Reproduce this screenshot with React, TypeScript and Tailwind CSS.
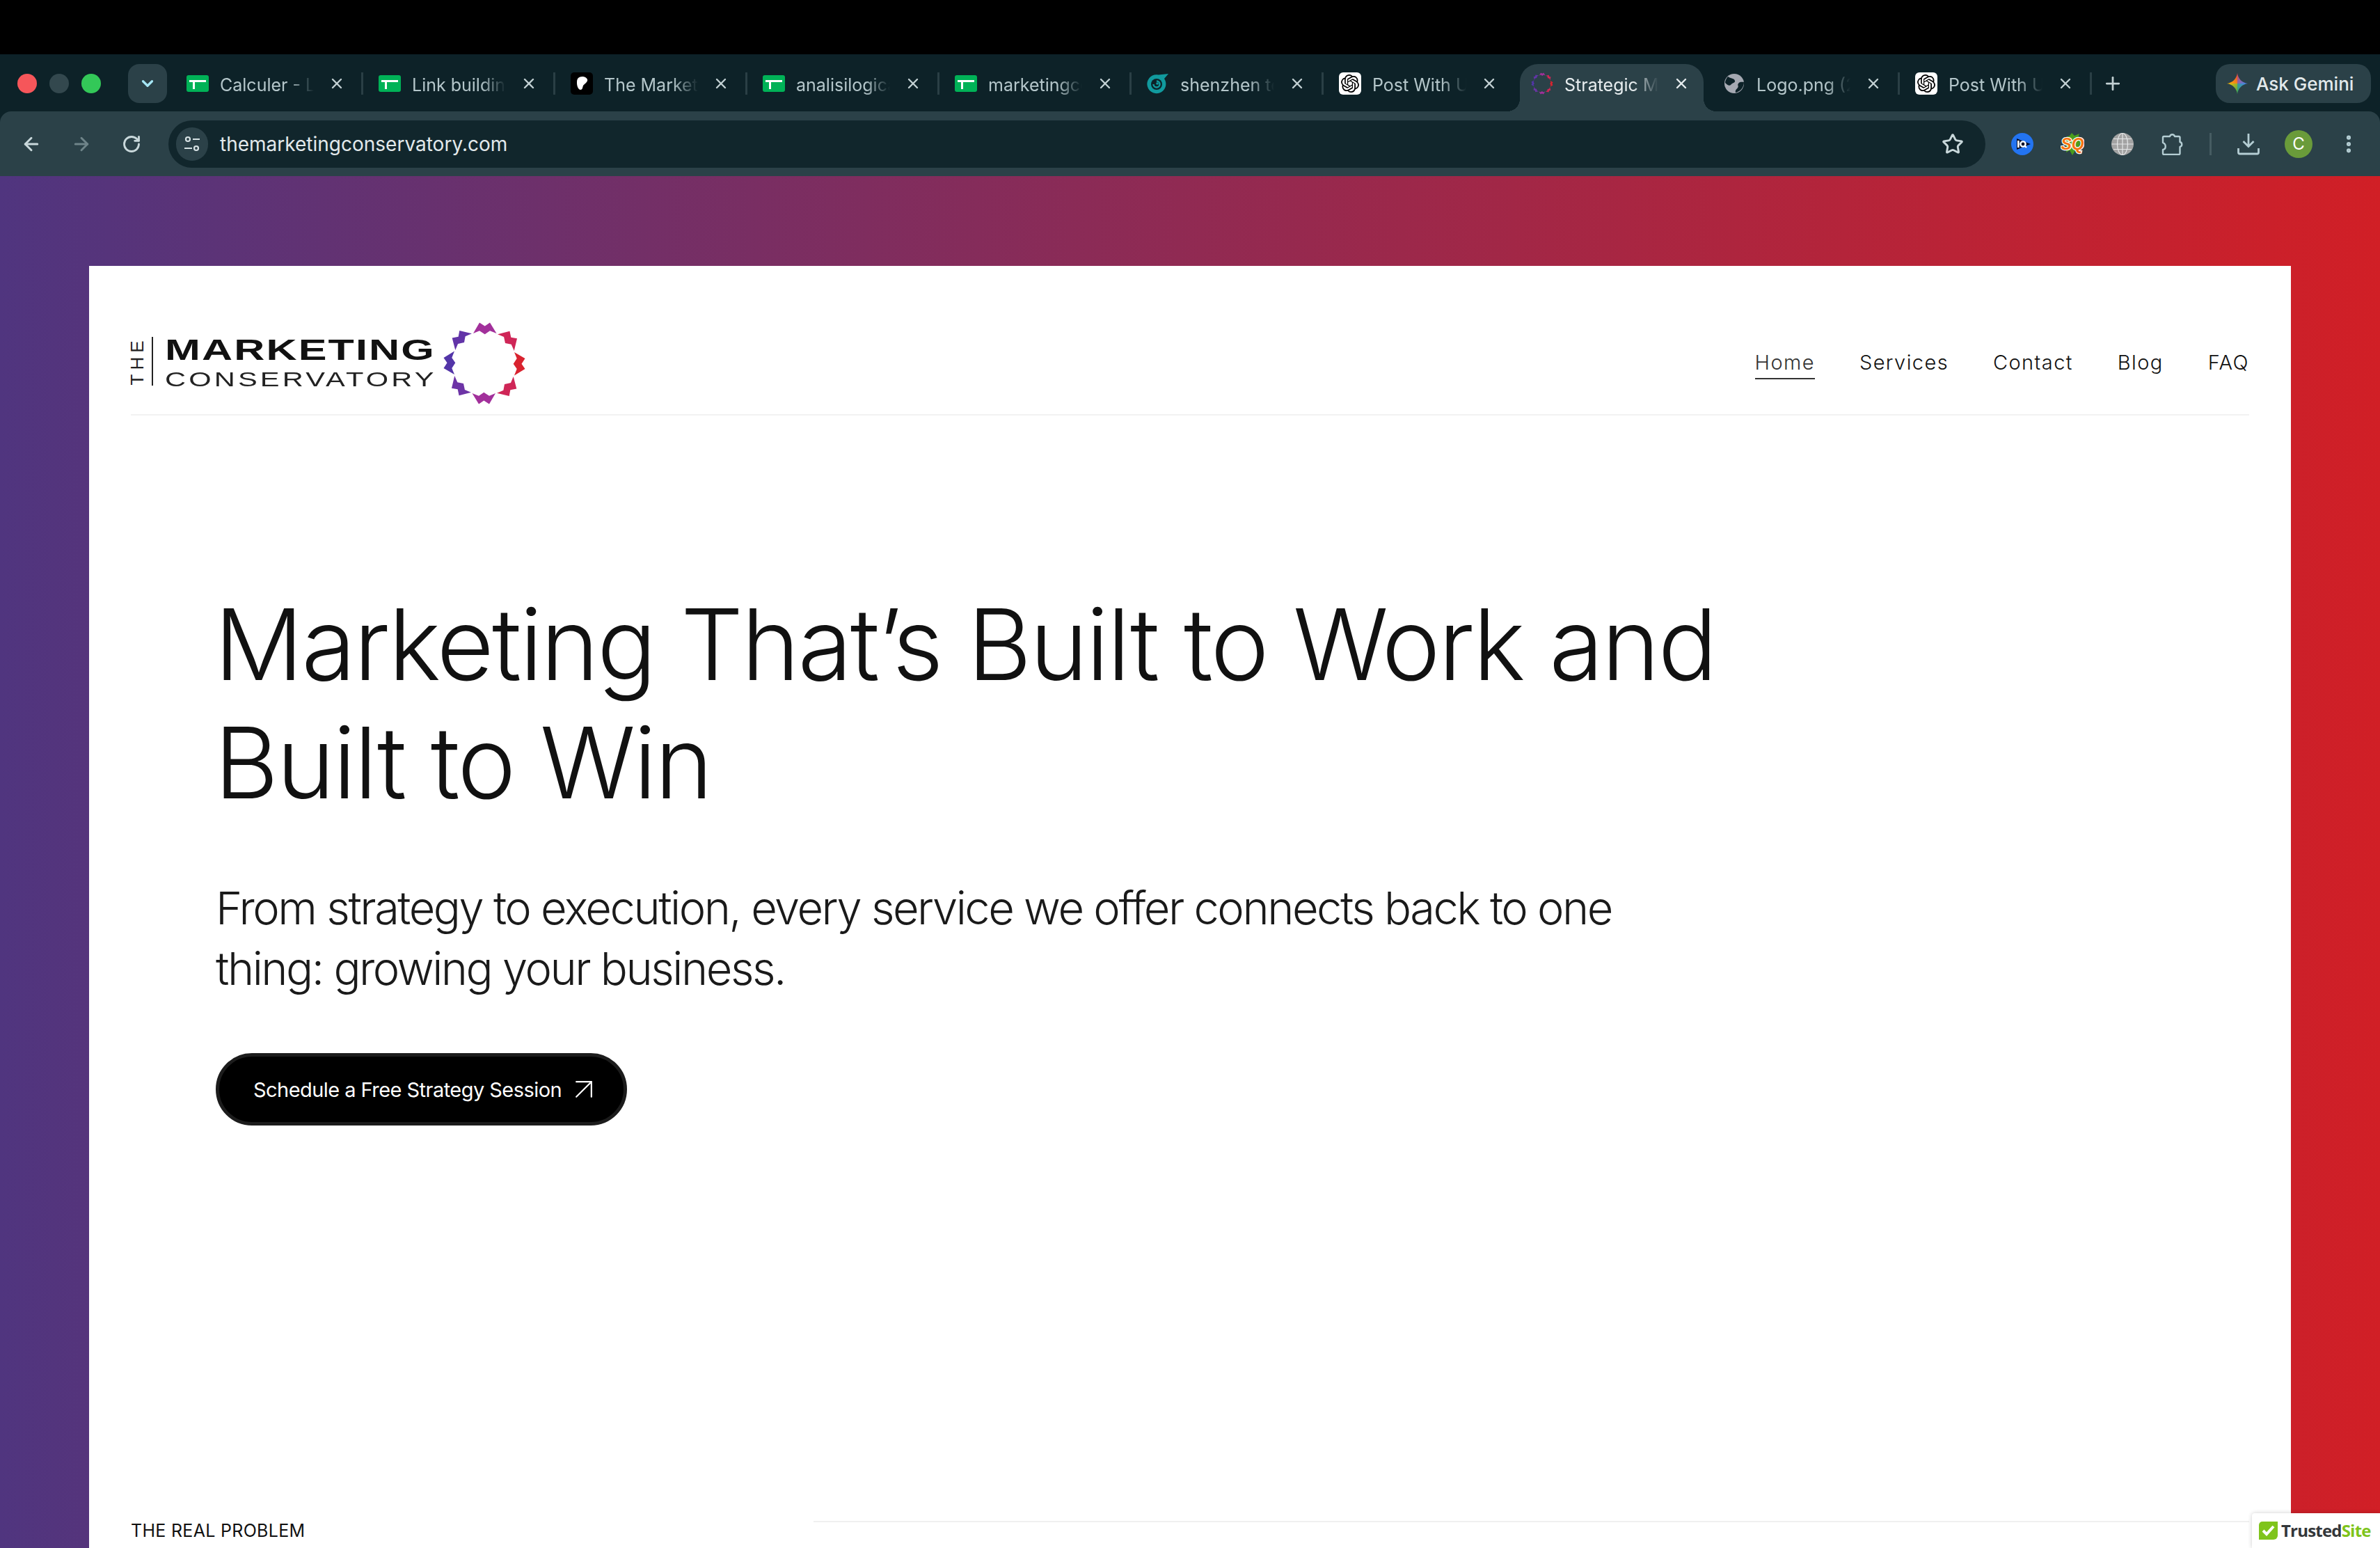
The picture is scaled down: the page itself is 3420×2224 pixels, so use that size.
import { ArrowLeft, ArrowRight, ArrowUpRight, ChevronDown, EllipsisVertical, Plus, RotateCw, Star, X } from "lucide-react";
import { SiOpenai } from "react-icons/si";

const Sheet = () => (
  <svg width="32" height="24" viewBox="0 0 32 24">
    <rect width="32" height="24" rx="3" fill="#00b257" />
    <path d="M4 7h24v3H12v10H9V10H4z" fill="#fff" />
  </svg>
);

const BlackBlob = () => (
  <svg width="32" height="32" viewBox="0 0 32 32">
    <rect width="32" height="32" rx="5" fill="#000" />
    <path d="M11 8c3-3 11-3 13 2 1 4-4 6-6 9-1 3-1 6-4 6-4-1-5-7-5-10 0-3 0-5 2-7z" fill="#fff" />
  </svg>
);

const TealSwirl = () => (
  <svg width="32" height="32" viewBox="0 0 32 32">
    <path d="M31 2 L25 9 A13.5 13.5 0 1 1 17 3.5 Z" fill="#119a9e" />
    <circle cx="14" cy="17" r="8" fill="#0d2228" />
    <path d="M14 12.5a4.5 4.5 0 1 1-4.5 4.5" fill="none" stroke="#119a9e" strokeWidth="2.5" />
    <circle cx="15" cy="16" r="1.8" fill="#119a9e" />
  </svg>
);

const OpenAi = () => (
  <span className="flex h-[32px] w-[32px] items-center justify-center rounded-[6px] bg-white text-black">
    <SiOpenai size={26} />
  </span>
);

const GlobeFav = () => (
  <svg width="30" height="30" viewBox="0 0 30 30">
    <circle cx="15" cy="15" r="14" fill="#a5a9b2" />
    <path d="M6 5c4 3 9 2 10 6 1 3-4 3-6 6-2 2-5 0-8-3 0-3 2-7 4-9zM29 13c-3 0-6-1-8 2-2 2 1 4-1 6-1 2-4 3-3 7 6-1 12-7 12-15z" fill="#0d2228" />
  </svg>
);

const zigzagColors = ["#a2309b", "#cf2657", "#d9232f", "#cf2657", "#a2309b", "#6d34a6", "#5335a8", "#6234a8"];

const SunMark = ({ size }: { size: number }) => (
  <svg width={size} height={size} viewBox="-60 -60 120 120">
    {zigzagColors.map((color, i) => (
      <polygon
        key={i}
        transform={`rotate(${i * 45})`}
        fill={color}
        points="-16,-43 -7,-58.5 0.7,-53.5 8,-58.5 17.5,-43 8,-46.7 0.7,-41.7 -7,-46.7"
      />
    ))}
  </svg>
);

const tabs = [
  { title: "Calculer - L", icon: <Sheet />, sep: true },
  { title: "Link buildin", icon: <Sheet />, sep: true },
  { title: "The Marketi", icon: <BlackBlob />, sep: true },
  { title: "analisilogica", icon: <Sheet />, sep: true },
  { title: "marketingco", icon: <Sheet />, sep: true },
  { title: "shenzhen te", icon: <TealSwirl />, sep: true },
  { title: "Post With U", icon: <OpenAi />, sep: false },
  { title: "Strategic Ma", icon: <SunMark size={32} />, sep: false, active: true },
  { title: "Logo.png (2", icon: <GlobeFav />, sep: true },
  { title: "Post With U", icon: <OpenAi />, sep: true },
];

const Tab = ({ title, icon, sep, active }: { title: string; icon: React.ReactNode; sep: boolean; active?: boolean }) => (
  <div className="relative flex h-[68px] w-[276px] shrink-0 items-center pb-[12px] pl-[20px]">
    {active && (
      <div className="absolute inset-y-0 left-[4px] right-[8px] rounded-t-[26px] bg-[#2b4148]">
        <div className="absolute bottom-0 left-[-18px] h-[18px] w-[18px] bg-[radial-gradient(circle_at_0_0,transparent_18px,#2b4148_18px)]" />
        <div className="absolute bottom-0 right-[-18px] h-[18px] w-[18px] bg-[radial-gradient(circle_at_100%_0,transparent_18px,#2b4148_18px)]" />
      </div>
    )}
    <span className="relative flex w-[32px] shrink-0 items-center justify-center">{icon}</span>
    <span
      className={`relative ml-[16px] mt-[3px] w-[150px] shrink-0 whitespace-nowrap text-[25px] leading-[32px] [mask-image:linear-gradient(to_right,black_66%,transparent_90%)] ${
        active ? "text-[#e6ecee]" : "text-[#b4c6ca]"
      }`}
    >
      {title}
    </span>
    <X className={`relative ml-[6px] shrink-0 ${active ? "text-[#e6ecee]" : "text-[#c2d0d3]"}`} size={24} strokeWidth={2.4} />
    {sep && <span className="absolute right-[2px] top-[12px] h-[32px] w-[3px] bg-[#2a3f45]" />}
  </div>
);

const SiteSettingsIcon = () => (
  <svg width="24" height="26" viewBox="0 0 24 26" fill="none" stroke="#d7e2e4" strokeWidth="2.2">
    <circle cx="6" cy="6" r="3" />
    <path d="M13 6h10M1 19h11" />
    <circle cx="18" cy="19" r="3" />
  </svg>
);

const IqIcon = () => (
  <svg width="32" height="32" viewBox="0 0 32 32">
    <circle cx="16" cy="16" r="16" fill="#2374f2" />
    <path d="M8 8 L28 16 L8 24z" fill="#07102a" />
    <rect x="9" y="11" width="2.6" height="10" fill="#fff" />
    <circle cx="17" cy="16" r="3.6" fill="none" stroke="#fff" strokeWidth="2.4" />
    <path d="M19 18l3 3" stroke="#fff" strokeWidth="2.2" />
  </svg>
);

const SqIcon = () => (
  <svg width="34" height="34" viewBox="0 0 34 34">
    <polygon points="8,7 13,5 16,1 20,5 27,2 25,8 29,13 26,22 28,27 22,25 17,33 13,26 8,29 9,23 5,14" fill="#4a9d1c" />
    <text
      x="17"
      y="25"
      textAnchor="middle"
      fontFamily="Liberation Sans, sans-serif"
      fontSize="23"
      fontWeight="700"
      fontStyle="italic"
      fill="#f57410"
      stroke="#fff"
      strokeWidth="2.6"
      paintOrder="stroke"
    >
      SQ
    </text>
  </svg>
);

const GlobeExt = () => (
  <svg width="32" height="32" viewBox="0 0 32 32" fill="none" stroke="#e4e6e7" strokeWidth="1.2">
    <circle cx="16" cy="16" r="16" fill="#a3a3a3" stroke="none" />
    <ellipse cx="16" cy="16" rx="7.5" ry="15.5" />
    <path d="M16 0v32M0.5 16h31M3 8.5h26M3 23.5h26" />
  </svg>
);

const PuzzleIcon = () => (
  <svg width="32" height="32" viewBox="0 0 32 32" fill="none" stroke="#b4cdd3" strokeWidth="2.4" strokeLinejoin="round">
    <path d="M3.500 5H12a3.600 3.600 0 0 1 7 0h6a1.500 1.500 0 0 1 1.500 1.500V13a3.600 3.600 0 0 1 0 7v9.500A1.500 1.500 0 0 1 25 31H3.500A1.500 1.500 0 0 1 2 29.500V24c5-1 5-8 0-10V6.500A1.500 1.500 0 0 1 3.500 5z" />
  </svg>
);

const DownloadIcon = () => (
  <svg width="32" height="32" viewBox="0 0 32 32" fill="none" stroke="#b4cdd3" strokeWidth="2.8">
    <path d="M16 1v18M8.500 12l7.500 7.500 7.500-7.500" />
    <path d="M1.500 22v6a2 2 0 0 0 2 2h25a2 2 0 0 0 2-2v-6" />
  </svg>
);

const GeminiStar = () => (
  <svg width="30" height="30" viewBox="0 0 30 30">
    <defs>
      <linearGradient id="gemTl" x1="1" y1="0" x2="0" y2="1">
        <stop offset="0" stopColor="#ea4335" />
        <stop offset="1" stopColor="#fbbc04" />
      </linearGradient>
      <linearGradient id="gemTr" x1="0" y1="0" x2="1" y2="1">
        <stop offset="0" stopColor="#d9455f" />
        <stop offset="1" stopColor="#4285f4" />
      </linearGradient>
      <linearGradient id="gemBr" x1="1" y1="0" x2="0" y2="1">
        <stop offset="0" stopColor="#4285f4" />
        <stop offset="1" stopColor="#34a853" />
      </linearGradient>
      <linearGradient id="gemBl" x1="0" y1="0" x2="1" y2="1">
        <stop offset="0" stopColor="#fbbc04" />
        <stop offset="1" stopColor="#34a853" />
      </linearGradient>
    </defs>
    <path d="M15 0C14 8 8 14 0 15H15z" fill="url(#gemTl)" />
    <path d="M15 0C16 8 22 14 30 15H15z" fill="url(#gemTr)" />
    <path d="M30 15C22 16 16 22 15 30V15z" fill="url(#gemBr)" />
    <path d="M0 15C8 16 14 22 15 30V15z" fill="url(#gemBl)" />
  </svg>
);

const ToolSlot = ({ children }: { children: React.ReactNode }) => (
  <span className="flex w-[72px] shrink-0 items-center justify-center">{children}</span>
);

const navItems = ["Home", "Services", "Contact", "Blog", "FAQ"];

export default function App() {
  return (
    <div className="flex h-[2224px] w-[3420px] flex-col overflow-hidden bg-black [font-family:Inter,sans-serif]">
      <div className="h-[78px] shrink-0 bg-black" />

      {/* tab strip */}
      <div className="flex h-[82px] shrink-0 items-start bg-[#0d2228] pt-[14px]">
        <div className="ml-[25px] mt-[14px] flex gap-[18px]">
          <span className="h-[28px] w-[28px] rounded-full bg-[#f6565a]" />
          <span className="h-[28px] w-[28px] rounded-full bg-[#33484e]" />
          <span className="h-[28px] w-[28px] rounded-full bg-[#33c858]" />
        </div>
        <div className="ml-[39px] flex h-[56px] w-[56px] items-center justify-center rounded-[16px] bg-[#2b4148] text-[#a5e6f5]">
          <ChevronDown size={26} strokeWidth={3} />
        </div>
        <div className="ml-[8px] flex">
          {tabs.map((tab, i) => (
            <Tab key={i} {...tab} />
          ))}
        </div>
        <div className="flex h-[56px] w-[56px] items-center justify-center text-[#c2d0d3]">
          <Plus size={30} strokeWidth={2.2} />
        </div>
        <div className="ml-auto mr-[13px] flex h-[56px] w-[223px] items-center gap-[12px] rounded-[20px] bg-[#2b4148] pl-[16px]">
          <GeminiStar />
          <span className="whitespace-nowrap text-[26px] font-medium text-[#e2e9eb]">Ask Gemini</span>
        </div>
      </div>

      {/* toolbar */}
      <div className="shrink-0 bg-[#0d2228]">
        <div className="flex h-[93px] items-center rounded-t-[16px] bg-[#2b4148]">
          <div className="flex w-[242px] shrink-0 pl-[9px]">
            <ToolSlot>
              <ArrowLeft className="text-[#c9d8db]" size={30} strokeWidth={2.4} />
            </ToolSlot>
            <ToolSlot>
              <ArrowRight className="text-[#6f8489]" size={30} strokeWidth={2.4} />
            </ToolSlot>
            <ToolSlot>
              <RotateCw className="text-[#c9d8db]" size={28} strokeWidth={2.4} />
            </ToolSlot>
          </div>
          <div className="flex h-[68px] w-[2611px] shrink-0 items-center rounded-full bg-[#11262c] pl-[11px]">
            <span className="flex h-[48px] w-[46px] items-center justify-center rounded-full bg-[#2b4148]">
              <SiteSettingsIcon />
            </span>
            <span className="ml-[17px] text-[28px] text-[#e2e9eb]">themarketingconservatory.com</span>
            <Star className="ml-auto mr-[31px] text-[#c9d8db]" size={32} strokeWidth={2.2} />
          </div>
          <div className="ml-[17px] flex items-center">
            <ToolSlot>
              <IqIcon />
            </ToolSlot>
            <ToolSlot>
              <SqIcon />
            </ToolSlot>
            <ToolSlot>
              <GlobeExt />
            </ToolSlot>
            <ToolSlot>
              <PuzzleIcon />
            </ToolSlot>
          </div>
          <span className="ml-[17px] h-[32px] w-[3px] shrink-0 bg-[#465c62]" />
          <div className="ml-[17px] flex items-center">
            <ToolSlot>
              <DownloadIcon />
            </ToolSlot>
            <ToolSlot>
              <span className="flex h-[40px] w-[40px] items-center justify-center rounded-full bg-[#6a9b3a] text-[24px] text-white">C</span>
            </ToolSlot>
            <ToolSlot>
              <EllipsisVertical className="text-[#b4cdd3]" size={32} strokeWidth={2.6} />
            </ToolSlot>
          </div>
        </div>
      </div>

      {/* page */}
      <main className="relative min-h-0 flex-1 bg-[linear-gradient(90deg,#50357f_0%,#d11f26_100%)] px-[128px] pt-[129px]">
        <div className="h-[1900px] bg-white px-[60px] text-[#111]">
          <header className="flex h-[215px] items-center justify-between border-b-2 border-[#f2f2f2] pt-[60px]">
            <div className="flex items-center">
              <div className="flex h-[72px] w-[18px] items-center justify-center">
                <span className="-rotate-90 whitespace-nowrap text-[26px] tracking-[6px] text-[#222] [font-family:'Liberation_Sans',sans-serif]">
                  THE
                </span>
              </div>
              <span className="ml-[12px] h-[70px] w-[2px] bg-[#222]" />
              <div className="ml-[17px] w-[390px] translate-y-[2px] overflow-hidden [font-family:'Liberation_Sans',sans-serif]">
                <div className="origin-left scale-x-[1.42] whitespace-nowrap text-[43px] font-bold leading-[36px] tracking-[1.5px] text-[#111]">
                  MARKETING
                </div>
                <div className="mt-[12px] origin-left scale-x-[1.387] whitespace-nowrap text-[30px] leading-[26px] tracking-[3px] text-[#222]">
                  CONSERVATORY
                </div>
              </div>
              <span className="ml-[9px] translate-y-[3px]">
                <SunMark size={120} />
              </span>
            </div>
            <nav className="flex items-center gap-[64px] pt-[5px]">
              {navItems.map((item, i) => (
                <a key={item} className={`relative text-[29px] font-[350] leading-[40px] tracking-[1.4px] ${i === 0 ? "text-[#333]" : "text-[#111]"}`}>
                  {item}
                  {i === 0 && <span className="absolute inset-x-0 bottom-[-4px] h-[2px] bg-[#333]" />}
                </a>
              ))}
            </nav>
          </header>

          <section className="ml-[120px]">
            <h1 className="mt-[243px] text-[142px] font-[350] leading-[170px] tracking-[-2.7px] text-[#111]">
              Marketing That’s Built to Work and
              <br />
              Built to Win
            </h1>
            <p className="ml-[2px] mt-[81px] text-[65px] font-[350] leading-[87px] tracking-[-2.5px] text-[#1a1a1a]">
              From strategy to execution, every service we offer connects back to one
              <br />
              thing: growing your business.
            </p>
            <a className="ml-[2px] mt-[78px] flex h-[104px] w-[591px] items-center rounded-full border-[5px] border-[#1c1c1c] bg-black pl-[49px] text-[29px] tracking-[-0.55px] text-white">
              <span className="pt-[2px]">Schedule a Free Strategy Session</span>
              <ArrowUpRight className="ml-[6px]" size={52} strokeWidth={1} />
            </a>
          </section>

          <div className="mt-[568px] flex items-start">
            <span className="w-[981px] pt-[2px] text-[25px] leading-[24px] tracking-[0.3px] text-[#111]">THE REAL PROBLEM</span>
            <span className="h-[2px] flex-1 bg-[#f0f0f0]" />
          </div>
        </div>

        <div className="absolute bottom-0 right-0 flex h-[50px] w-[184px] items-start gap-[5px] rounded-tl-[4px] bg-white pl-[10px] pt-[12px] shadow-[0_0_6px_rgba(0,0,0,0.2)]">
          <svg width="27" height="26" viewBox="0 0 27 26" className="shrink-0">
            <path d="M5 0h22v20a6 6 0 0 1-6 6H0V5a5 5 0 0 1 5-5z" fill="#7fc41c" />
            <path d="M6 13l5 5 10-11" fill="none" stroke="#fff" strokeWidth="4" />
          </svg>
          <span className="whitespace-nowrap text-[24px] font-bold leading-[26px] tracking-[-0.8px] text-[#33373a] [font-family:'Open_Sans',sans-serif]">
            Trusted<span className="text-[#7fc41c]">Site</span>
          </span>
        </div>
      </main>
    </div>
  );
}
